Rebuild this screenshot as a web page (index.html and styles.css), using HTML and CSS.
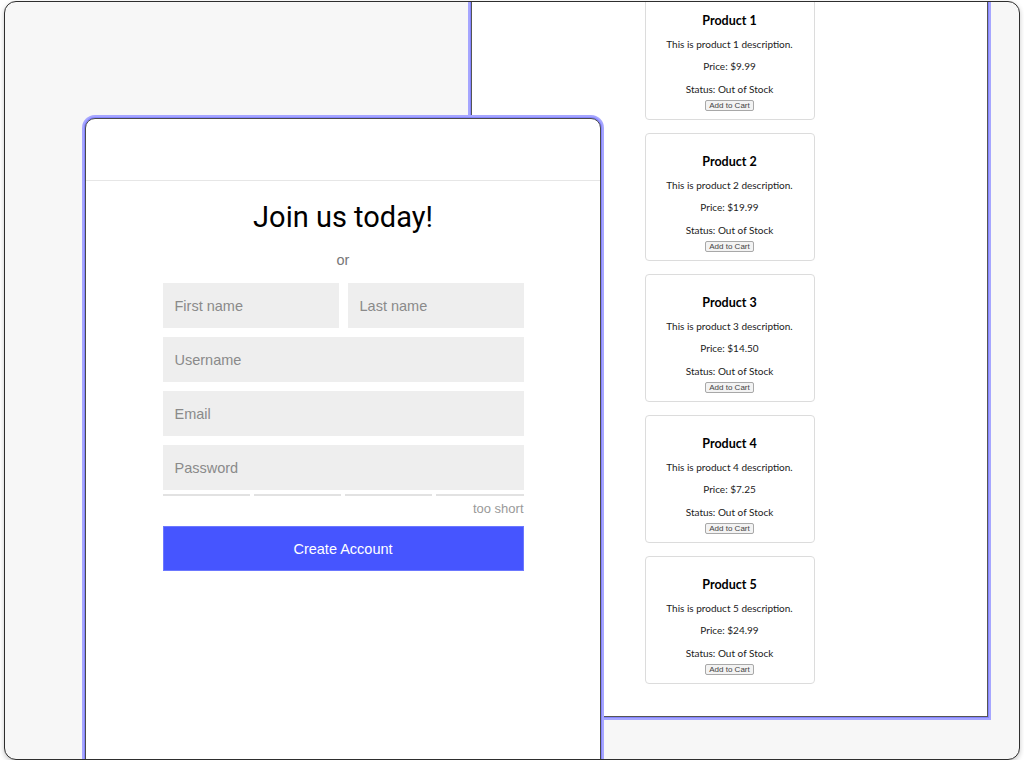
FILE: index.html
```html
<!DOCTYPE html>
<html lang="en">
<head>
<meta charset="utf-8">
<title>Join us today</title>
<link rel="stylesheet" href="styles.css">
</head>
<body>
<div class="frame">
  <section class="window shop">
    <div class="card">
      <h3 class="card-title">Product 1</h3>
      <p class="card-text">This is product 1 description.</p>
      <p class="card-text price">Price: $9.99</p>
      <p class="card-text status">Status: Out of Stock</p>
      <button class="cart-btn">Add to Cart</button>
    </div>
    <div class="card">
      <h3 class="card-title">Product 2</h3>
      <p class="card-text">This is product 2 description.</p>
      <p class="card-text price">Price: $19.99</p>
      <p class="card-text status">Status: Out of Stock</p>
      <button class="cart-btn">Add to Cart</button>
    </div>
    <div class="card">
      <h3 class="card-title">Product 3</h3>
      <p class="card-text">This is product 3 description.</p>
      <p class="card-text price">Price: $14.50</p>
      <p class="card-text status">Status: Out of Stock</p>
      <button class="cart-btn">Add to Cart</button>
    </div>
    <div class="card">
      <h3 class="card-title">Product 4</h3>
      <p class="card-text">This is product 4 description.</p>
      <p class="card-text price">Price: $7.25</p>
      <p class="card-text status">Status: Out of Stock</p>
      <button class="cart-btn">Add to Cart</button>
    </div>
    <div class="card">
      <h3 class="card-title">Product 5</h3>
      <p class="card-text">This is product 5 description.</p>
      <p class="card-text price">Price: $24.99</p>
      <p class="card-text status">Status: Out of Stock</p>
      <button class="cart-btn">Add to Cart</button>
    </div>
  </section>

  <section class="window signup">
    <header class="signup-head"></header>
    <form class="signup-form">
      <h1 class="title">Join us today!</h1>
      <div class="or">or</div>
      <div class="row">
        <input class="field" type="text" placeholder="First name">
        <input class="field" type="text" placeholder="Last name">
      </div>
      <input class="field" type="text" placeholder="Username">
      <input class="field" type="email" placeholder="Email">
      <input class="field" type="password" placeholder="Password">
      <div class="strength">
        <span class="bar"></span><span class="bar"></span><span class="bar"></span><span class="bar"></span>
      </div>
      <div class="hint">too short</div>
      <button class="submit" type="button">Create Account</button>
    </form>
  </section>
</div>
</body>
</html>
```

FILE: styles.css
```css
html, body {
  margin: 0;
  padding: 0;
  background: #ffffff;
}

body {
  padding: 1px 4px 0 4px;
}

.frame {
  position: relative;
  height: 759px;
  box-sizing: border-box;
  border: 1px solid #2e2e2e;
  border-radius: 12px;
  background: #f7f7f7;
  overflow: hidden;
  box-shadow: 0 2px 5px rgba(0, 0, 0, 0.22);
}

.window {
  position: absolute;
  background: #ffffff;
  border: 1px solid #555555;
  box-shadow: 0 0 0 1px #8585ff, 0 0 0 3px #a6a6ff;
  box-sizing: border-box;
}

/* back window: product list */
.shop {
  left: 466px;
  top: -42px;
  width: 517px;
  padding: 31px 0 32px 0;
  display: flex;
  flex-direction: column;
  align-items: center;
  gap: 13px;
  font-family: "Lato", "Noto Sans", sans-serif;
  color: #222;
}

.card {
  width: 170px;
  height: 128px;
  box-sizing: border-box;
  border: 1px solid #dcdcdc;
  border-radius: 4px;
  padding-top: 20px;
  display: flex;
  flex-direction: column;
  align-items: center;
}

.card-title {
  margin: 0;
  font-size: 12.5px;
  line-height: 16px;
  font-weight: 700;
  color: #000;
}

.card-text {
  margin: 8px 0 0 0;
  font-size: 10px;
  line-height: 14px;
  color: #222;
}

.status {
  margin-top: 9px;
}

.cart-btn {
  margin-top: 4px;
  height: 11px;
  padding: 0 3px;
  font-family: "Liberation Sans", Arial, sans-serif;
  font-size: 8px;
  line-height: 9px;
  color: #444;
  background: #f3f3f3;
  border: 1px solid #a8a8a8;
  border-radius: 2px;
}

/* front window: signup */
.signup {
  left: 80px;
  top: 116px;
  width: 516px;
  height: 700px;
  border-radius: 10px 10px 0 0;
  border-color: #4a4a4a;
  font-family: "Liberation Sans", Arial, sans-serif;
}

.signup-head {
  height: 61px;
  border-bottom: 1px solid #e6e6e6;
  border-radius: 10px 10px 0 0;
}

.signup-form {
  width: 361px;
  margin: 0 auto;
  padding-top: 18px;
  display: flex;
  flex-direction: column;
  gap: 9px;
}

.title {
  margin: 0;
  font-family: "Roboto", "Liberation Sans", sans-serif;
  font-weight: 400;
  font-size: 29px;
  line-height: 36px;
  text-align: center;
  color: #000;
}

.or {
  margin: 6px 0 4px 0;
  text-align: center;
  font-size: 14.5px;
  line-height: 20px;
  color: #777;
}

.row {
  display: flex;
  gap: 9px;
}

.field {
  display: block;
  box-sizing: border-box;
  width: 100%;
  min-width: 0;
  height: 45px;
  margin: 0;
  padding: 0 12px;
  border: none;
  background: #eeeeee;
  font-family: "Liberation Sans", Arial, sans-serif;
  font-size: 14.5px;
  color: #333;
  outline: none;
}

.field::placeholder {
  color: #8a8a8a;
}

.strength {
  display: flex;
  gap: 4px;
  margin-top: -5px;
}

.bar {
  flex: 1;
  height: 2px;
  background: #e2e2e2;
}

.hint {
  margin-top: -4px;
  text-align: right;
  font-size: 13px;
  line-height: 16px;
  color: #999;
}

.submit {
  height: 45px;
  margin: 0;
  border: 1px solid #6c78ff;
  background: #4655ff;
  color: #ffffff;
  font-family: "Liberation Sans", Arial, sans-serif;
  font-size: 14.5px;
  cursor: pointer;
}
```
